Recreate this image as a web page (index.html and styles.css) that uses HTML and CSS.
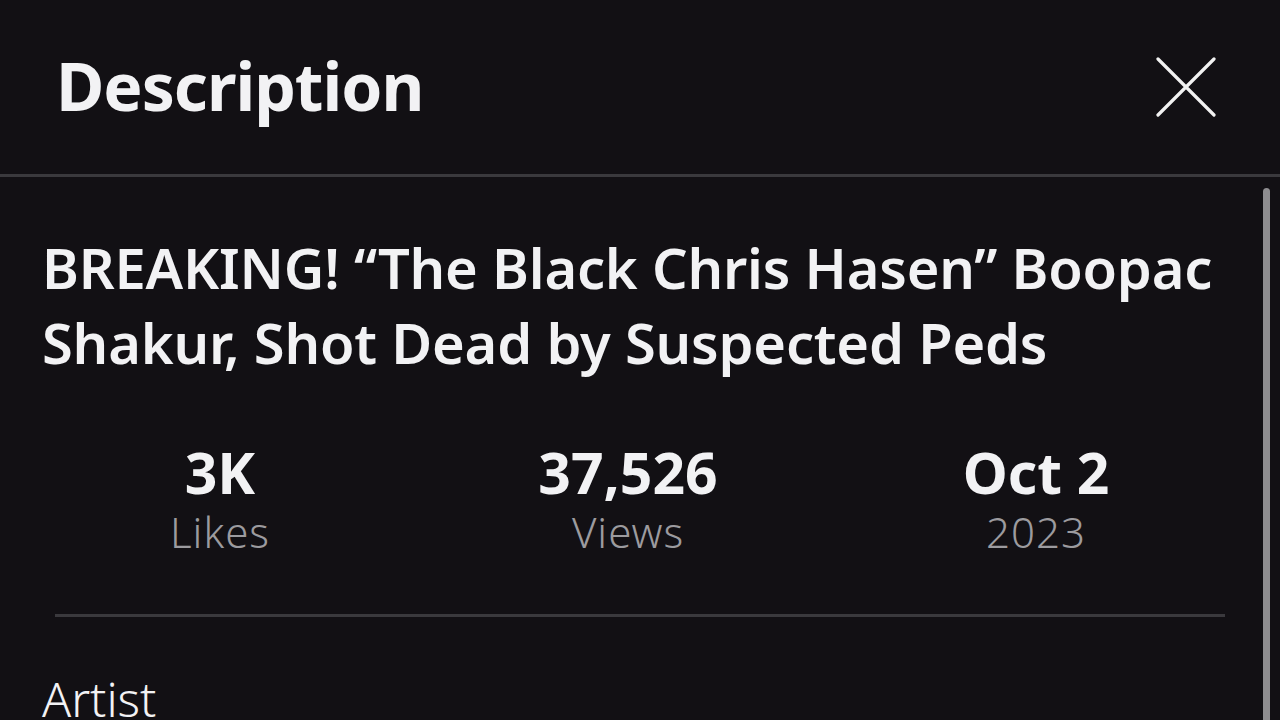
FILE: index.html
```html
<!DOCTYPE html>
<html>
<head>
<meta charset="utf-8">
<link rel="stylesheet" href="styles.css">
</head>
<body>
<div class="panel">
  <header class="header">
    <h1 class="heading">Description</h1>
    <button class="close" aria-label="Close">
      <svg width="60" height="60" viewBox="0 0 60 60"><path d="M2 2 L58 58 M58 2 L2 58" stroke="#f2f2f2" stroke-width="3.2" stroke-linecap="round"/></svg>
    </button>
  </header>
  <main class="body">
    <div class="scrollbar"></div>
    <h2 class="title">BREAKING! “The Black Chris Hasen” Boopac Shakur, Shot Dead by Suspected Peds</h2>
    <div class="stats">
      <div class="stat"><span class="num">3K</span><span class="label">Likes</span></div>
      <div class="stat"><span class="num">37,526</span><span class="label">Views</span></div>
      <div class="stat"><span class="num">Oct 2</span><span class="label">2023</span></div>
    </div>
    <div class="divider"></div>
    <div class="section">Artist</div>
  </main>
</div>
</body>
</html>
```
FILE: styles.css
```css
html, body {
  margin: 0;
  padding: 0;
  background: #121014;
  height: 100%;
  overflow: hidden;
}
.panel {
  font-family: "Noto Sans", "DejaVu Sans", sans-serif;
  color: #f2f2f4;
  height: 720px;
  display: flex;
  flex-direction: column;
}
.header {
  height: 177px;
  border-bottom: 3px solid #3a393d;
  display: flex;
  align-items: center;
  justify-content: space-between;
  padding: 0 64px 0 56px;
  box-sizing: border-box;
  flex-shrink: 0;
}
.heading {
  margin: 0;
  font-size: 66px;
  font-weight: 700;
  letter-spacing: -1px;
  line-height: 1;
  transform: translateY(-2px);
}
.close {
  background: none;
  border: 0;
  padding: 0;
  display: flex;
}
.body {
  position: relative;
  flex: 1;
  padding: 53px 0 0 42px;
}
.scrollbar {
  position: absolute;
  right: 10px;
  top: 11px;
  width: 7px;
  height: 560px;
  border-radius: 4px;
  background: #8e8d90;
}
.title {
  margin: 0;
  font-size: 56px;
  font-weight: 600;
  line-height: 75px;
  letter-spacing: -0.2px;
  width: 1210px;
}
.stats {
  display: grid;
  grid-template-columns: 1fr 1fr 1fr;
  margin: 60px 0 0 -26px;
  width: 1224px;
}
.stat {
  display: flex;
  flex-direction: column;
  align-items: center;
}
.num {
  font-size: 57px;
  font-weight: 700;
  line-height: 64px;
}
.label {
  font-size: 42px;
  font-weight: 300;
  letter-spacing: 1px;
  color: #9c9b9f;
  line-height: 56px;
}
.divider {
  height: 3px;
  background: #3a393d;
  margin: 54px 0 0 13px;
  width: 1170px;
}
.section {
  margin-top: 54px;
  font-size: 48px;
  font-weight: 300;
  line-height: 56px;
}
```
